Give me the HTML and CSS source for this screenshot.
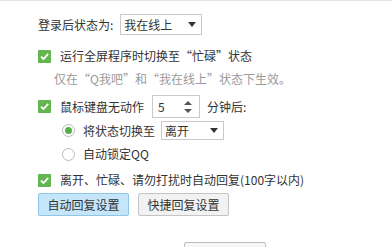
FILE: index.html
```html
<!DOCTYPE html>
<html>
<head>
<meta charset="utf-8">
<link rel="stylesheet" href="styles.css">
</head>
<body>
<div class="panel">
  <div class="row r-status">
    <span class="label">登录后状态为:</span>
    <div class="select sel-status"><span class="val">我在线上</span><span class="arrow"></span></div>
  </div>
  <div class="row r-full">
    <span class="check"><svg viewBox="0 0 13 13" width="13" height="13"><path d="M3 6.6 L5.5 9 L10.2 3.8" fill="none" stroke="#fff" stroke-width="1.8"/></svg></span>
    <span class="label">运行全屏程序时切换至“忙碌”状态</span>
  </div>
  <div class="row r-hint">
    <span class="hint">仅在“Q我吧”和“我在线上”状态下生效。</span>
  </div>
  <div class="row r-idle">
    <span class="check"><svg viewBox="0 0 13 13" width="13" height="13"><path d="M3 6.6 L5.5 9 L10.2 3.8" fill="none" stroke="#fff" stroke-width="1.8"/></svg></span>
    <span class="label">鼠标键盘无动作</span>
    <div class="spin"><span class="val">5</span><span class="spin-btns"><span class="up"></span><span class="down"></span></span></div>
    <span class="label">分钟后:</span>
  </div>
  <div class="row r-radio1">
    <span class="radio on"><span class="dot"></span></span>
    <span class="label">将状态切换至</span>
    <div class="select sel-away"><span class="val">离开</span><span class="arrow"></span></div>
  </div>
  <div class="row r-radio2">
    <span class="radio"></span>
    <span class="label">自动锁定QQ</span>
  </div>
  <div class="row r-reply">
    <span class="check"><svg viewBox="0 0 13 13" width="13" height="13"><path d="M3 6.6 L5.5 9 L10.2 3.8" fill="none" stroke="#fff" stroke-width="1.8"/></svg></span>
    <span class="label">离开、忙碌、请勿打扰时自动回复(100字以内)</span>
  </div>
  <div class="row r-buttons">
    <button class="btn btn-primary">自动回复设置</button>
    <button class="btn">快捷回复设置</button>
  </div>
  <div class="row r-bottom">
    <button class="btn btn-bottom"></button>
  </div>
</div>
</body>
</html>
```
FILE: styles.css
```css
html, body {
  margin: 0;
  padding: 0;
  background: #fff;
  overflow: hidden;
}
body {
  width: 392px;
  height: 248px;
  font-family: "Noto Sans CJK SC", "Microsoft YaHei", sans-serif;
  font-size: 12px;
  color: #333;
}
.panel {
  box-sizing: border-box;
  height: 248px;
  overflow: hidden;
  border-top: 1px solid #e3e3e3;
  padding: 13px 0 0 38px;
  display: flex;
  flex-direction: column;
}
.row {
  display: flex;
  align-items: center;
  white-space: nowrap;
  flex-shrink: 0;
}
.label {
  line-height: 16px;
}
.r-status { height: 21px; }
.r-status .label { margin-right: 7px; }
.r-full { height: 20px; margin-top: 11px; }
.r-hint { height: 20px; margin-top: 2px; padding-left: 16px; }
.hint { color: #9a9a9a; }
.r-idle { height: 23px; margin-top: 7px; }
.r-radio1 { height: 19px; margin-top: 3px; padding-left: 24px; }
.r-radio2 { height: 20px; margin-top: 4px; padding-left: 24px; }
.r-reply { height: 20px; margin-top: 6px; }
.r-buttons { height: 23px; margin-top: 3px; gap: 9px; }
.r-bottom { height: 5px; margin-top: 26px; padding-left: 146px; align-items: flex-start; overflow: hidden; }

.check {
  width: 13px;
  height: 13px;
  background: #63b54f;
  border-radius: 1px;
  margin-right: 9px;
  display: inline-flex;
}
.radio {
  box-sizing: border-box;
  width: 13px;
  height: 13px;
  border: 1px solid #b9b9b9;
  border-radius: 50%;
  margin-right: 8px;
  display: inline-flex;
  align-items: center;
  justify-content: center;
  background: #fff;
}
.radio .dot {
  width: 7px;
  height: 7px;
  border-radius: 50%;
  background: #5aae49;
}
.select {
  box-sizing: border-box;
  height: 21px;
  border: 1px solid #c9c9c9;
  background: #fff;
  display: flex;
  align-items: center;
  justify-content: space-between;
  padding: 0 5px 0 3px;
}
.sel-status { width: 82px; }
.sel-away { width: 63px; height: 19px; margin-left: 6px; }
.arrow {
  width: 0;
  height: 0;
  border-left: 4px solid transparent;
  border-right: 4px solid transparent;
  border-top: 5px solid #333;
}
.spin {
  box-sizing: border-box;
  width: 48px;
  height: 23px;
  border: 1px solid #c9c9c9;
  margin: 0 7px 0 8px;
  display: flex;
  align-items: center;
  justify-content: space-between;
  padding: 0 7px 0 5px;
}
.spin-btns {
  display: flex;
  flex-direction: column;
  gap: 4px;
}
.spin .up {
  width: 0; height: 0;
  border-left: 4px solid transparent;
  border-right: 4px solid transparent;
  border-bottom: 4px solid #555;
}
.spin .down {
  width: 0; height: 0;
  border-left: 4px solid transparent;
  border-right: 4px solid transparent;
  border-top: 4px solid #555;
}
.btn {
  box-sizing: border-box;
  height: 23px;
  width: 91px;
  border: 1px solid #c4c4c4;
  background: #f2f2f2;
  border-radius: 2px;
  font-family: inherit;
  font-size: 12px;
  color: #333;
  padding: 0;
  margin: 0;
  flex-shrink: 0;
}
.btn-primary {
  background: #c5e5f9;
  border-color: #8fc6e8;
}
.btn-bottom {
  width: 82px;
  height: 20px;
  background: #f7f7f7;
  border-color: #bdbdbd;
}
```
